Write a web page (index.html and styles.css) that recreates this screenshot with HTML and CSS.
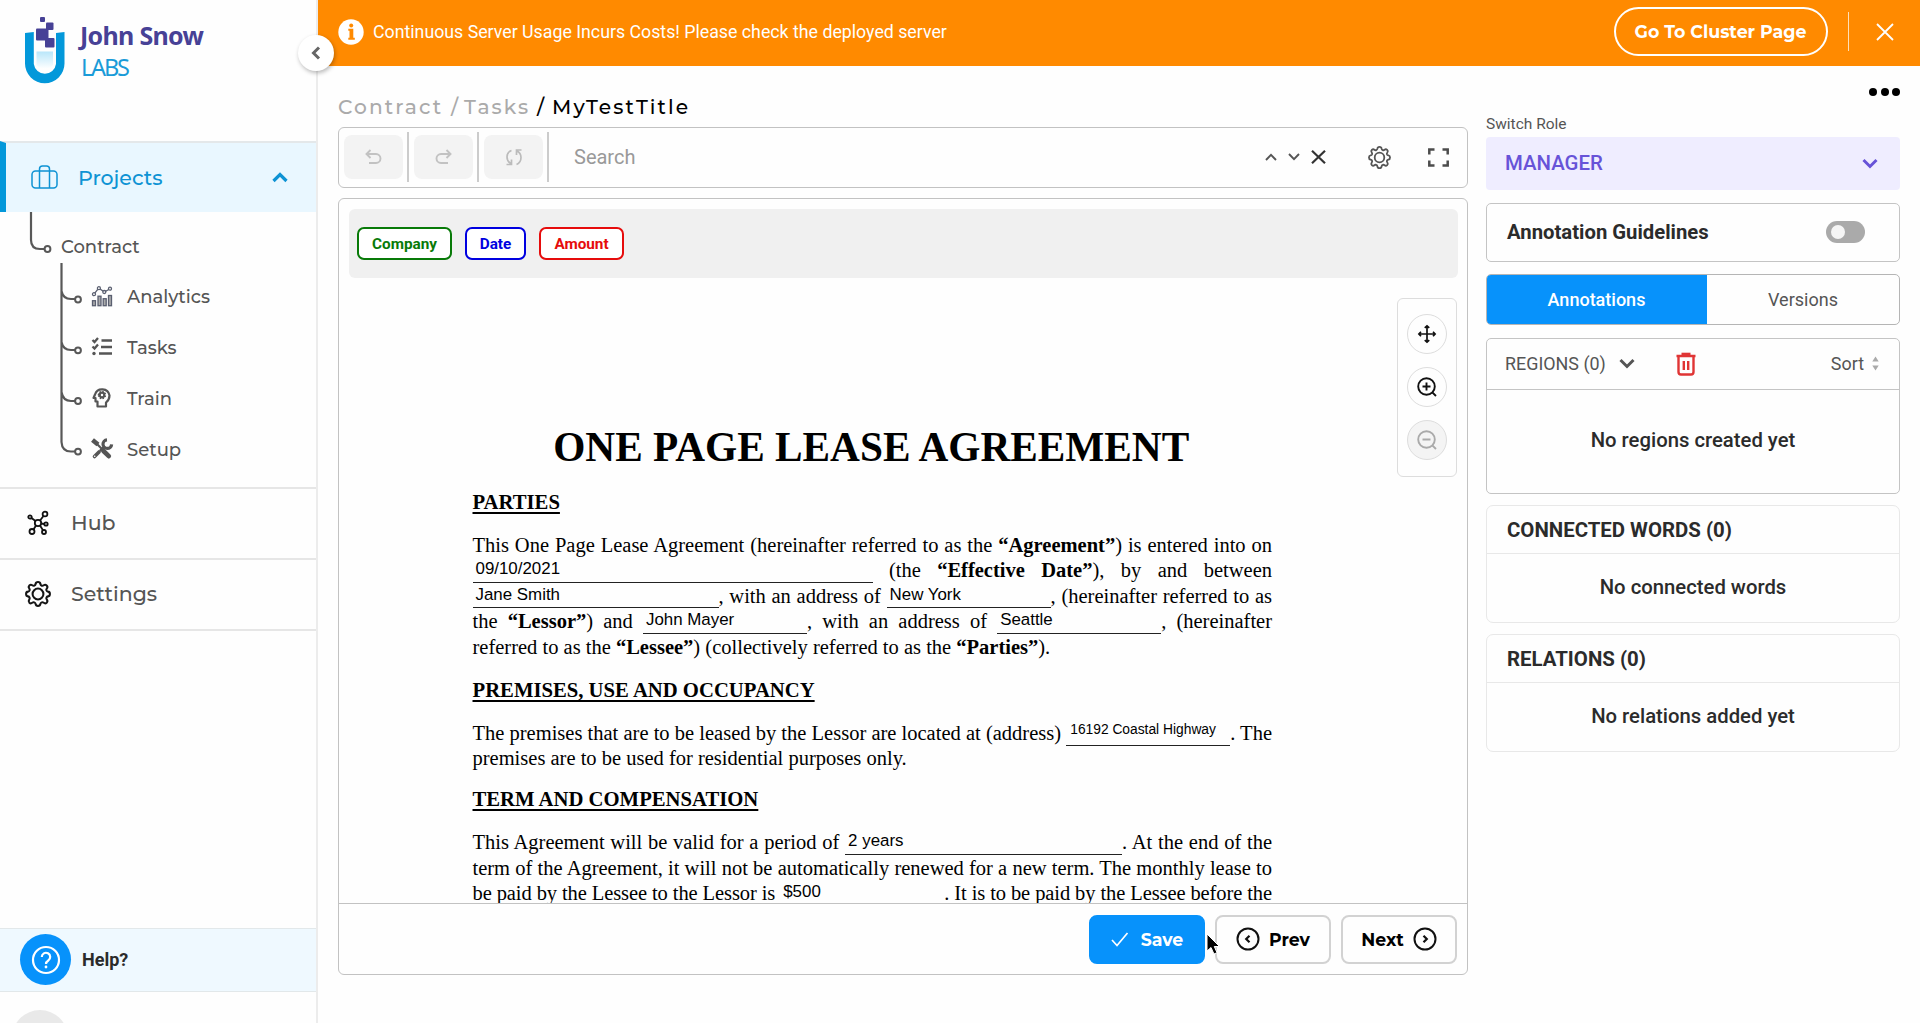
FILE: index.html
```html
<!DOCTYPE html>
<html lang="en">
<head>
<meta charset="utf-8">
<title>MyTestTitle</title>
<link rel="stylesheet" href="styles.css">
</head>
<body>
<svg class="defs" width="0" height="0">
  <symbol id="gear" viewBox="0 0 24 24"><g fill="none" stroke="currentColor"><path stroke-linejoin="round" d="M9.8 2.8 Q10 1 12 1 Q14 1 14.2 2.8 Q14.4 4 15.4 4.3 Q16.3 4.7 17.3 3.9 Q18.7 2.9 20 4.1 Q21.300 5.400 20.200 6.800 Q19.400 7.700 19.800 8.700 Q20.200 9.600 21.300 9.800 Q23 10 23 12 Q23 14 21.300 14.200 Q20.200 14.400 19.800 15.300 Q19.400 16.300 20.200 17.200 Q21.300 18.700 20 20 Q18.700 21.200 17.300 20.100 Q16.300 19.300 15.400 19.700 Q14.400 20.100 14.200 21.200 Q14 23 12 23 Q10 23 9.800 21.200 Q9.600 20.100 8.600 19.700 Q7.700 19.300 6.700 20.100 Q5.300 21.200 4 20 Q2.800 18.700 3.900 17.200 Q4.600 16.300 4.200 15.300 Q3.800 14.400 2.700 14.200 Q1 14 1 12 Q1 10 2.700 9.800 Q3.800 9.600 4.200 8.700 Q4.600 7.700 3.900 6.800 Q2.800 5.400 4 4.100 Q5.300 2.900 6.700 3.900 Q7.700 4.700 8.600 4.300 Q9.600 3.900 9.800 2.800Z"/><circle cx="12" cy="12" r="5"/></g></symbol>
</svg>
<div class="app">
  <aside class="sidebar">
    <div class="brand">
      <svg class="brand-mark" width="40" height="68" viewBox="0 0 40 68">
        <defs><linearGradient id="liq" x1="0" y1="0" x2="0" y2="1"><stop offset="0" stop-color="#b9e6fa"/><stop offset="1" stop-color="#fff"/></linearGradient></defs>
        <path fill="#0398da" d="M0 16 L8.800 15 V47 A11.200 11.200 0 0 0 31 47 V16 L39.500 15 V46.500 A19.750 19.750 0 0 1 0 46.500Z"/>
        <path fill="url(#liq)" d="M11.500 34.500H28V48Q20 56 11.500 48Z"/>
        <g fill="#474196"><rect x="15" y="0" width="5" height="5" rx="1"/><rect x="21" y="5.500" width="7.500" height="7.500" rx="1"/><rect x="11" y="11.500" width="12.500" height="12" rx="1"/><rect x="20" y="21" width="9.500" height="9.500" rx="1"/></g>
      </svg>
      <div class="brand-text"><div class="brand-name">John Snow</div><div class="brand-labs">LABS</div></div>
    </div>
    <nav>
      <div class="projects">
        <svg width="27" height="24" viewBox="0 0 27 24" fill="none" stroke="#0e93d4" stroke-width="1.500"><rect x="1" y="6" width="25" height="17" rx="3.500"/><path d="M8.500 23V4a3 3 0 0 1 3-3h4a3 3 0 0 1 3 3v19"/></svg>
        <span class="projects-label">Projects</span>
        <svg class="push" width="16" height="12" viewBox="0 0 16 12" fill="none" stroke="#0e93d4" stroke-width="3.200"><path d="M1.500 10 8 3.500 14.500 10"/></svg>
      </div>
      <div class="tree">
        <svg class="tree-lines" width="60" height="250" viewBox="0 0 60 250" fill="none" stroke="#585858" stroke-width="2.200"><path d="M2 0V28Q2 37 11 37H15.500M32.500 51V230Q33 239.500 42 239.500H46M32.500 79Q34 87 42 87H46M32.500 130Q34 138 42 138H46M32.500 180Q34 189 42 189H46"/><g stroke-width="2"><circle cx="18.500" cy="37" r="2.900"/><circle cx="49" cy="87.500" r="2.900"/><circle cx="49" cy="138.300" r="2.900"/><circle cx="49" cy="189" r="2.900"/><circle cx="49" cy="239.600" r="2.900"/></g></svg>
        <div class="tree-root">Contract</div>
        <div class="tree-item"><svg width="22" height="22" viewBox="0 0 22 22" fill="#aaa" stroke="#5a5f70" stroke-width="1.300"><rect x="1.500" y="14.700" width="3" height="5"/><rect x="7" y="10.200" width="3" height="9.500"/><rect x="12.200" y="12.700" width="3" height="7"/><rect x="17.500" y="9.500" width="3" height="10.200"/><path fill="none" d="M3 8.200 7.700 2.200 13.500 6 19 2.800"/><g fill="#fff"><circle cx="3" cy="8.200" r="1.500"/><circle cx="7.900" cy="2.200" r="1.500"/><circle cx="13.300" cy="6" r="1.500"/><circle cx="19" cy="2.700" r="1.500"/></g></svg><span>Analytics</span></div>
        <div class="tree-item"><svg width="22" height="22" viewBox="0 0 22 22" fill="none" stroke="#555" stroke-width="2.300"><path d="M10.500 3.500H21M10 10H21M8 16.500H21M1.500 3 3.500 5 7 1M1.500 9.500 3.500 11.500 7 7.500"/><circle cx="3" cy="16.500" r="1.700" fill="#555" stroke="none"/></svg><span>Tasks</span></div>
        <div class="tree-item"><svg width="22" height="22" viewBox="0 0 22 22" fill="none" stroke="#555" stroke-width="2.200" stroke-linejoin="round"><path d="M6.500 18.500H15V14.500C18 12 18.500 10 18.500 7.500A7.500 7.500 0 0 0 4 6.500L2.500 10H4.500V13.500H6.500Z"/><circle cx="11" cy="7" r="2.300"/><path stroke-width="1.500" stroke-dasharray="1.400 1.420" d="M7.500 7a3.500 3.500 0 1 1 7 0a3.500 3.500 0 1 1-7 0"/></svg><span>Train</span></div>
        <div class="tree-item"><svg width="22" height="22" viewBox="0 0 22 22" fill="none" stroke="#555"><path stroke-width="4.600" stroke-linecap="round" d="M12.500 12 17.800 17.200"/><path stroke-width="4.600" d="M1.500 1 7 5.500"/><path stroke-width="2.200" d="M5 4 13 12"/><path stroke-width="3.600" stroke-linecap="round" d="M3.500 17.500 8 13"/><path stroke-width="2.500" d="M9 12 14 7"/><path stroke-width="3.200" d="M16 .8A4.300 4.300 0 1 0 20.600 5.300"/><circle cx="3.700" cy="17.300" r=".8" fill="#fff" stroke="none"/></svg><span>Setup</span></div>
      </div>
      <div class="nav-row">
        <svg width="26" height="26" viewBox="0 0 26 26" fill="none" stroke="#111" stroke-width="1.800"><circle cx="13" cy="13" r="3.200"/><circle cx="5" cy="7" r="1.700"/><circle cx="20" cy="4" r="2.400"/><circle cx="21" cy="14" r="1.700"/><circle cx="7" cy="21.500" r="2.500"/><circle cx="19" cy="22" r="2"/><path d="M6.500 8 10.500 11M15 10.500 18.500 6M16 13.500 19.300 14M11 15.500 8.500 19.500M15 15.500 18 20.200"/></svg>
        <span>Hub</span>
      </div>
      <div class="nav-row"><svg width="26" height="26" stroke-width="1.900" color="#151515"><use href="#gear"/></svg><span>Settings</span></div>
    </nav>
    <div class="help">
      <span class="help-icon"><svg width="30" height="30" viewBox="0 0 30 30" fill="none" stroke="#fff" stroke-width="2.200"><circle cx="15" cy="15" r="13"/><path d="M10.800 12a4.200 4.200 0 1 1 6.500 3.500Q15 17 15 19"/><circle cx="15" cy="22" r="1.400" fill="#fff" stroke="none"/></svg></span>
      <span>Help?</span>
    </div>
    <div class="user"><span class="avatar"></span></div>
    <button class="collapse"><svg width="10" height="14" viewBox="0 0 10 14" fill="none" stroke="#666" stroke-width="3"><path d="M8 1.500 2.500 7 8 12.500"/></svg></button>
  </aside>
  <div class="content">
    <header class="banner">
      <svg width="26" height="26" viewBox="0 0 26 26"><circle cx="13" cy="13" r="12.700" fill="#fff"/><path fill="#ff8a00" d="M10.300 9.800h5v9h1.500v2H10.300v-2h1.200v-7h-1.200z"/><circle cx="13.200" cy="6.500" r="2" fill="#ff8a00"/></svg>
      <span class="banner-text">Continuous Server Usage Incurs Costs! Please check the deployed server</span>
      <button class="cluster">Go To Cluster Page</button>
      <span class="banner-sep"></span>
      <svg width="18" height="18" viewBox="0 0 18 18" stroke="#fff" stroke-width="1.800"><path d="M1 1 17 17M17 1 1 17"/></svg>
    </header>
    <div class="work">
      <main class="main">
        <div class="crumbs"><span class="c1">Contract</span><span class="c2">/</span><span class="c3">Tasks</span><span class="c4">/</span><span class="c5">MyTestTitle</span></div>
        <div class="toolbar">
          <span class="tool"><svg width="18" height="17" viewBox="0 0 18 17" fill="none" stroke="#c2c2c2" stroke-width="1.900"><path d="M5.500 1 1.500 5 5.500 9M1.500 5H11a4.500 4.500 0 0 1 0 9H4"/></svg></span>
          <span class="tool"><svg width="18" height="17" viewBox="0 0 18 17" fill="none" stroke="#c2c2c2" stroke-width="1.900"><path d="M11.500 1 15.500 5 11.500 9M15.500 5H6a4.500 4.500 0 0 0 0 9H13"/></svg></span>
          <span class="tool"><svg width="18" height="17" viewBox="0 0 18 17" fill="none" stroke="#bbb" stroke-width="1.700"><path d="M6.500 1.500Q2 3 2 8Q2 12.500 6.500 15M1.500 15.500H6.500V10.500M11.500 15.500Q16 13.500 16 8.500Q16 4 11.500 1.500M16.500 1H11.500V6"/></svg></span>
          <span class="search">Search</span>
          <svg width="12" height="8" viewBox="0 0 12 8" fill="none" stroke="#555" stroke-width="1.900"><path d="M1 7 6 1.800 11 7"/></svg>
          <svg class="g-down" width="12" height="8" viewBox="0 0 12 8" fill="none" stroke="#555" stroke-width="1.900"><path d="M1 1 6 6.200 11 1"/></svg>
          <svg class="g-x" width="15" height="14" viewBox="0 0 15 14" fill="none" stroke="#333" stroke-width="2.200"><path d="M1 .8 14 13.200M14 .8 1 13.200"/></svg>
          <svg class="g-gear" width="23" height="23" stroke-width="1.900" color="#555"><use href="#gear"/></svg>
          <svg class="g-full" width="21" height="19" viewBox="0 0 21 19" fill="none" stroke="#4c4c4c" stroke-width="2.500"><path d="M1.300 6.500V1.500H6.500M14.500 1.500H19.700V6.500M19.700 12.500V17.500H14.500M6.500 17.500H1.300V12.500"/></svg>
        </div>
        <section class="panel">
          <div class="view">
            <div class="labels"><span class="label company">Company</span><span class="label date">Date</span><span class="label amount">Amount</span></div>
            <div class="zoombox">
              <span class="zoombtn"><svg width="18" height="18" viewBox="0 0 20 20" fill="none" stroke="#111" stroke-width="1.900"><path d="M10 1V19M1 10H19M7.500 3.300 10 1 12.500 3.300M7.500 16.700 10 19 12.500 16.700M3.300 7.500 1 10 3.300 12.500M16.700 7.500 19 10 16.700 12.500"/></svg></span>
              <span class="zoombtn"><svg width="20" height="20" viewBox="0 0 20 20" fill="none" stroke="#111" stroke-width="1.900"><circle cx="9.500" cy="9.500" r="8.300"/><path d="M5.500 9.500H13.500M9.500 5.500V13.500M15.300 15.300 19 19"/></svg></span>
              <span class="zoombtn off"><svg width="20" height="20" viewBox="0 0 20 20" fill="none" stroke="#aaa" stroke-width="1.900"><circle cx="9.500" cy="9.500" r="8.300"/><path d="M5.500 9.500H13.500M15.300 15.300 19 19"/></svg></span>
            </div>
            <article class="doc">
              <h1>ONE PAGE LEASE AGREEMENT</h1>
              <h2>PARTIES</h2>
              <div class="para">
                <p>This One Page Lease Agreement (hereinafter referred to as the <b>“Agreement”</b>) is entered into on</p>
                <p><span class="blank w400">09/10/2021</span> (the <b>“Effective Date”</b>), by and between</p>
                <p><span class="blank w246">Jane Smith</span>, with an address of <span class="blank">New York</span>, (hereinafter referred to as</p>
                <p>the <b>“Lessor”</b>) and <span class="blank">John Mayer</span>, with an address of <span class="blank">Seattle</span>, (hereinafter</p>
                <p class="last">referred to as the <b>“Lessee”</b>) (collectively referred to as the <b>“Parties”</b>).</p>
              </div>
              <h2>PREMISES, USE AND OCCUPANCY</h2>
              <div class="para para-short">
                <p>The premises that are to be leased by the Lessor are located at (address) <span class="blank small">16192 Coastal Highway</span>. The</p>
                <p class="last">premises are to be used for residential purposes only.</p>
              </div>
              <h2>TERM AND COMPENSATION</h2>
              <div class="para">
                <p>This Agreement will be valid for a period of <span class="blank w277">2 years</span>. At the end of the</p>
                <p>term of the Agreement, it will not be automatically renewed for a new term. The monthly lease to</p>
                <p class="tight">be paid by the Lessee to the Lessor is <span class="blank">$500</span>. It is to be paid by the Lessee before the</p>
              </div>
            </article>
          </div>
          <footer class="actions">
            <button class="btn save"><svg width="18" height="15" viewBox="0 0 18 15" fill="none" stroke="#fff" stroke-width="1.700"><path d="M1 8 6 13.500 16.500 1"/></svg><span>Save</span></button>
            <button class="btn"><svg width="24" height="24" viewBox="0 0 24 24" fill="none" stroke="#111" stroke-width="2"><circle cx="12" cy="12" r="10.500"/><path stroke-width="2.200" d="M13.500 8.700 10.200 12 13.500 15.300"/></svg><span>Prev</span></button>
            <button class="btn"><span>Next</span><svg width="24" height="24" viewBox="0 0 24 24" fill="none" stroke="#111" stroke-width="2"><circle cx="12" cy="12" r="10.500"/><path stroke-width="2.200" d="M10.500 8.700 13.800 12 10.500 15.300"/></svg></button>
          </footer>
        </section>
      </main>
      <aside class="side">
        <div class="dots"><i></i><i></i><i></i></div>
        <div class="role-label">Switch Role</div>
        <div class="role"><span>MANAGER</span><svg width="16" height="11" viewBox="0 0 16 11" fill="none" stroke="#6753d8" stroke-width="3"><path d="M1.500 2 8 8.500 14.500 2"/></svg></div>
        <div class="box guide"><span>Annotation Guidelines</span><span class="toggle"></span></div>
        <div class="tabs"><span class="tab on">Annotations</span><span class="tab">Versions</span></div>
        <div class="box regions">
          <div class="regions-head"><span>REGIONS (0)</span>
            <svg class="r-chev" width="16" height="11" viewBox="0 0 16 11" fill="none" stroke="#555" stroke-width="3"><path d="M1.500 2 8 8.500 14.500 2"/></svg>
            <svg class="r-trash" width="20" height="24" viewBox="0 0 20 24" fill="none" stroke="#e03535" stroke-width="2.400"><path d="M.5 4H19.500M2.500 4.500V20Q2.500 22.500 5 22.500H15Q17.500 22.500 17.500 20V4.500M7.800 9V18M12.200 9V18"/><path stroke-width="3" d="M5.500 2.200H14.500"/></svg>
            <span class="sort">Sort</span><svg width="7" height="15" viewBox="0 0 7 15" fill="#aaa"><path d="M.3 5.500 3.500 .5 6.700 5.500ZM.3 9.500H6.700L3.500 14.500Z"/></svg></div>
          <div class="empty">No regions created yet</div>
        </div>
        <div class="box soft"><div class="soft-head">CONNECTED WORDS (0)</div><div class="empty">No connected words</div></div>
        <div class="box soft"><div class="soft-head">RELATIONS (0)</div><div class="empty">No relations added yet</div></div>
      </aside>
    </div>
  </div>
</div>
<svg class="cursor" width="16" height="24" viewBox="0 0 16 24"><path d="M1 1V18L5 14.500 8 21 11 19.700 8.300 13.500H13.500Z" fill="#000" stroke="#fff" stroke-width="1"/></svg>
</body>
</html>
```
FILE: styles.css
```css
* { box-sizing: border-box; }
body { margin: 0; background: #fefefe; font-family: Roboto, sans-serif; color: #2b2b2b; height: 1023px; overflow: hidden; }
button { font: inherit; border: 0; padding: 0; background: none; }
svg { display: block; flex: none; overflow: visible; }
.defs { position: absolute; }
h1, h2, p { margin: 0; }
.app { display: flex; height: 1023px; }

/* sidebar */
.sidebar { position: relative; width: 318px; flex: none; border-right: 2px solid #ececec; display: flex; flex-direction: column; font-family: Montserrat, Inter, sans-serif; font-weight: 500; color: #555; }
.brand { display: flex; height: 141px; padding: 17px 0 0 25px; gap: 15px; }
.brand-text { font-family: "Noto Sans", sans-serif; padding-top: 3px; white-space: nowrap; }
.brand-name { font-size: 25px; line-height: 30px; font-weight: 700; letter-spacing: -.7px; color: #474196; }
.brand-labs { font-size: 23.500px; line-height: 30px; font-weight: 400; letter-spacing: -2.200px; color: #1a9bd8; padding-left: 1px; margin-top: 2px; }
.projects { display: flex; align-items: center; height: 71px; border-top: 2px solid #e4e8ea; border-left: 6px solid #0398da; background: #e9f7ff; padding: 0 28px 1px 25px; gap: 20px; color: #0e93d4; font-size: 20.500px; }
.push { margin-left: auto; }
.tree { position: relative; height: 275px; padding-top: 20px; font-size: 18px; }
.tree-lines { position: absolute; left: 29px; top: 0; }
.tree-root { height: 30px; line-height: 30px; padding-left: 61px; margin-bottom: 10px; }
.tree-item { display: flex; align-items: center; height: 50.800px; padding-left: 91px; gap: 14px; }
.nav-row { display: flex; align-items: center; height: 71px; border-top: 2px solid #e6e6e6; padding: 0 0 2px 25px; gap: 20px; font-size: 20.500px; }
.nav-row:last-child { height: 73px; border-bottom: 2px solid #e6e6e6; }
.help { margin-top: auto; height: 64px; display: flex; align-items: center; gap: 11px; padding: 0 0 1px 20px; background: #eff9ff; border-top: 1px solid #e2e8ea; border-bottom: 1px solid #e2e8ea; font: 700 18px Roboto, sans-serif; color: #2b2b2b; }
.help-icon { width: 51px; height: 51px; border-radius: 50%; background: #0792fb; display: grid; place-items: center; }
.user { height: 31px; overflow: hidden; padding: 18px 0 0 12px; }
.avatar { display: block; width: 56px; height: 56px; border-radius: 50%; background: #e9e9e9; }
.collapse { position: absolute; left: 298px; top: 35px; width: 36px; height: 36px; border-radius: 50%; background: #fff; box-shadow: 1px 2px 4px rgba(0,0,0,.28); display: grid; place-items: center; z-index: 2; }

/* banner */
.content { flex: 1; display: flex; flex-direction: column; }
.banner { height: 66px; background: #ff8a00; color: #fff; display: flex; align-items: center; padding: 0 26px 3px 20px; font-size: 17.750px; }
.banner-text { margin-left: 9px; }
.cluster { margin-left: auto; width: 214px; height: 49px; border: 2px solid #fff; border-radius: 25px; color: #fff; font: 700 17.400px Montserrat, Inter, sans-serif; }
.banner-sep { width: 1.500px; height: 39px; background: #ffe0b8; margin: 0 27px 0 20px; }

/* main column */
.work { flex: 1; display: flex; padding: 0 20px 0 20px; gap: 18px; }
.main { width: 1130px; display: flex; flex-direction: column; }
.crumbs { display: flex; align-items: center; height: 61px; padding-top: 20px; font: 500 20.200px Montserrat, Inter, sans-serif; letter-spacing: 2.100px; color: #aaa; }
.c1 { width: 113px; } .c2 { width: 13px; } .c3 { width: 73px; } .c4 { width: 15px; }
.c4, .c5 { color: #000; }
.toolbar { height: 61px; border: 1.500px solid #c2c2c2; border-radius: 6px; display: flex; align-items: center; padding: 0 18px 1px 5px; }
.tool { width: 59px; height: 44px; border-radius: 8px; background: #f3f3f3; display: grid; place-items: center; margin-right: 11px; position: relative; }
.tool::after { content: ""; position: absolute; left: 63px; top: -3px; width: 1.500px; height: 50px; background: #ccc; }
.search { flex: 1; padding-left: 20px; font-size: 20px; color: #999; }
.g-down { margin-left: 11px; } .g-x { margin-left: 11px; } .g-gear { margin-left: 42px; } .g-full { margin-left: 37px; }
.panel { margin-top: 10px; height: 777px; border: 1.500px solid #c2c2c2; border-radius: 6px; display: flex; flex-direction: column; }
.view { position: relative; flex: 1; overflow: hidden; padding: 10px 9px 0 10px; }
.labels { height: 69px; background: #f0f0f0; border-radius: 6px; display: flex; align-items: center; padding: 0 8px; gap: 13px; font-size: 15.300px; font-weight: 700; }
.label { height: 33px; border: 2px solid; border-radius: 7px; background: #fff; display: grid; place-items: center; }
.company { width: 95px; color: #087a08; } .date { width: 61px; color: #0000e0; } .amount { width: 85px; color: #e60c0c; }
.zoombox { position: absolute; left: 1058px; top: 99px; width: 60px; height: 179px; border: 1px solid #ddd; border-radius: 6px; display: flex; flex-direction: column; align-items: center; padding-top: 15px; gap: 13px; }
.zoombtn { width: 40px; height: 40px; border: 1px solid #ddd; border-radius: 50%; display: grid; place-items: center; }
.off { background: #f4f4f4; }
.doc { width: 799.500px; margin: 144.500px 0 0 123.500px; font-family: "Liberation Serif", serif; font-size: 20.500px; line-height: 25.500px; color: #000; white-space: nowrap; }
.doc h1 { font-size: 41.300px; line-height: 48px; text-align: center; margin-bottom: 19px; margin-left: -2px; }
.doc h2 { font-size: 20.700px; line-height: 25.500px; height: 26px; margin-bottom: 17px; text-decoration: underline; text-decoration-thickness: 2px; text-underline-offset: 3px; text-decoration-skip-ink: none; }
.para { margin-bottom: 17.500px; }
.para-short { margin-bottom: 15.700px; }
.doc p { height: 25.500px; text-align: justify; text-align-last: justify; }
.doc .last { text-align-last: left; }
.doc .tight { letter-spacing: -.1px; }
.blank { display: inline-block; width: 164px; padding: 0 0 4.500px 3px; border-bottom: 1.500px solid #222; font-family: "Liberation Sans", sans-serif; font-size: 16.900px; line-height: 16px; vertical-align: 3px; text-align: left; text-align-last: left; letter-spacing: 0; }
.w400 { width: 400px; } .w246 { width: 246px; } .w277 { width: 277px; }
.small { font-size: 13.800px; vertical-align: 6px; padding-bottom: 7.500px; padding-left: 4px; }
.actions { height: 71px; border-top: 1.500px solid #c2c2c2; display: flex; justify-content: flex-end; align-items: flex-start; padding: 10.500px 10px 0 0; gap: 10px; }
.btn { width: 116px; height: 49px; border: 2px solid #d2d2d2; border-radius: 8px; display: flex; align-items: center; justify-content: center; gap: 9px; font: 700 17.300px Montserrat, Inter, sans-serif; color: #000; }
.save { background: #0792fb; border-color: #0792fb; color: #fff; gap: 12px; }

/* right column */
.side { width: 414px; }
.dots { display: flex; gap: 3.500px; justify-content: flex-end; padding: 22px 0 0; }
.dots i { width: 8px; height: 8px; border-radius: 50%; background: #000; }
.role-label { font-size: 15.500px; line-height: 20px; margin: 18px 0 3px; color: #555; }
.role { height: 53px; background: #efedff; border-radius: 4px; display: flex; align-items: center; justify-content: space-between; padding: 0 22px 1px 19px; font-size: 20.400px; font-weight: 500; color: #6753d8; }
.box { border: 1.500px solid #c4c4c4; border-radius: 5px; font-size: 20.300px; font-weight: 500; }
.guide { margin-top: 13px; height: 59px; display: flex; align-items: center; justify-content: space-between; padding: 0 34px 1px 20px; font-weight: 700; }
.toggle { width: 39px; height: 22px; border-radius: 11px; background: #aaa; padding: 4px 5px; }
.toggle::before { content: ""; display: block; width: 14px; height: 14px; border-radius: 50%; background: #f5f5f5; }
.tabs { margin-top: 12px; height: 51px; display: flex; border: 1.500px solid #b5b5b5; border-radius: 5px; overflow: hidden; font-size: 18px; color: #555; }
.tab { flex: 1; display: grid; place-items: center; }
.on { flex: none; width: 221px; margin: -2px 0 -2px -1px; background: #0792fb; color: #fff; font-weight: 500; }
.regions { margin-top: 13px; height: 156px; display: flex; flex-direction: column; }
.regions-head { height: 51px; border-bottom: 1.500px solid #c4c4c4; display: flex; align-items: center; padding: 0 20px 1px 18px; font-size: 17.900px; font-weight: 400; color: #555; }
.r-chev { margin-left: 13px; } .r-trash { margin-left: 41px; }
.sort { margin-left: auto; margin-right: 8px; }
.empty { flex: 1; display: grid; place-items: center; padding-bottom: 3px; }
.soft { margin-top: 11px; height: 118px; display: flex; flex-direction: column; border-color: #e8e8e8; border-radius: 7px; }
.soft-head { height: 48px; border-bottom: 1px solid #e8e8e8; display: flex; align-items: center; padding-left: 20px; font-size: 20.400px; font-weight: 700; }
.cursor { position: absolute; left: 1206px; top: 933px; z-index: 5; }
```
